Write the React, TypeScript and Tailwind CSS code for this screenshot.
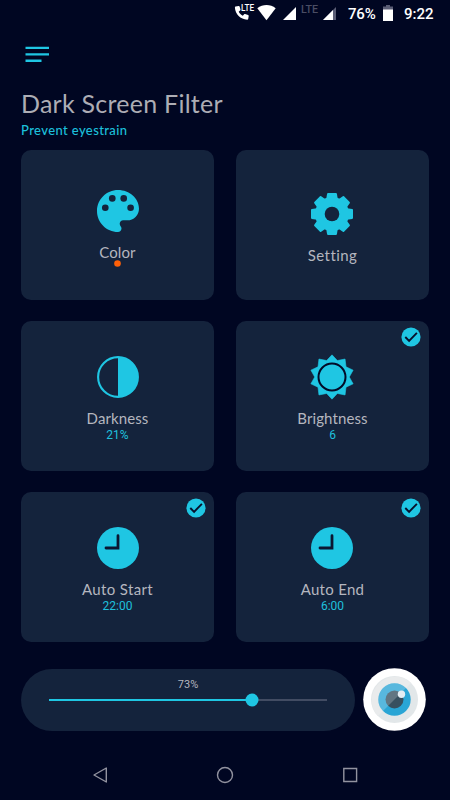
import type { ReactNode } from "react";

const GEAR_TEETH = [0, 45, 90, 135, 180, 225, 270, 315];

const SUN_POINTS = Array.from({ length: 20 }, (_, i) => {
  const r = i % 2 === 0 ? 22.2 : 17.3;
  const a = (i * Math.PI) / 10;
  return `${(23 + r * Math.sin(a)).toFixed(2)},${(23 - r * Math.cos(a)).toFixed(2)}`;
}).join(" ");

function PaletteIcon() {
  return (
    <svg width="42" height="42" viewBox="3 3 18 18">
      <path
        fill="#1fc6e3"
        d="M12 3c-4.97 0-9 4.03-9 9s4.03 9 9 9c.83 0 1.5-.67 1.5-1.5 0-.39-.15-.74-.39-1.01-.23-.26-.38-.61-.38-.99 0-.83.67-1.5 1.5-1.5H16c2.76 0 5-2.24 5-5 0-4.42-4.03-8-9-8z"
      />
      <g fill="#14233c">
        <circle cx="6.55" cy="10.6" r="1.42" />
        <circle cx="9.55" cy="6.6" r="1.42" />
        <circle cx="14.45" cy="6.6" r="1.42" />
        <circle cx="17.4" cy="10.6" r="1.42" />
      </g>
    </svg>
  );
}

function GearIcon() {
  return (
    <svg width="42" height="42" viewBox="-21 -21 42 42">
      <g fill="#1fc6e3">
        <circle r="17" />
        {GEAR_TEETH.map((deg) => (
          <path key={deg} d="M-5.8-15L-4.9-20.2Q-4.7-21-4-21H4Q4.7-21 4.9-20.2L5.8-15Z" transform={`rotate(${deg})`} />
        ))}
      </g>
      <circle r="7.3" fill="#14233c" />
    </svg>
  );
}

function ContrastIcon() {
  return (
    <svg width="42" height="42" viewBox="0 0 42 42">
      <circle cx="21" cy="21" r="19.9" fill="none" stroke="#1fc6e3" strokeWidth="2.1" />
      <path d="M21 1a20 20 0 0 1 0 40z" fill="#1fc6e3" />
    </svg>
  );
}

function SunIcon() {
  return (
    <svg width="46" height="46" viewBox="0 0 46 46">
      <polygon points={SUN_POINTS} fill="#1fc6e3" stroke="#1fc6e3" strokeWidth="0.6" strokeLinejoin="round" />
      <circle cx="23" cy="23" r="13.5" fill="none" stroke="#020b27" strokeWidth="2" />
    </svg>
  );
}

function ClockIcon() {
  return (
    <svg width="42" height="42" viewBox="0 0 42 42">
      <circle cx="21" cy="21" r="21" fill="#1fc6e3" />
      <path d="M21 8.7V21H9" fill="none" stroke="#0b1732" strokeWidth="2.8" strokeLinecap="round" />
    </svg>
  );
}

function CheckBadge() {
  return (
    <svg className="absolute top-1.5 right-2" width="20" height="20" viewBox="0 0 20 20">
      <circle cx="10" cy="10" r="9.6" fill="#1fc6e3" />
      <path d="M4.3 10l3.8 3.8 7.8-8" fill="none" stroke="#07112c" strokeWidth="1.9" />
    </svg>
  );
}

type TileProps = {
  icon: ReactNode;
  iconClass: string;
  label: string;
  labelClass: string;
  value?: string;
  checked?: boolean;
  dot?: boolean;
};

function Tile({ icon, iconClass, label, labelClass, value, checked, dot }: TileProps) {
  return (
    <div className="relative flex h-[150px] flex-col items-center rounded-[10px] bg-[#14233c]">
      {checked && <CheckBadge />}
      <div className={`flex h-[42px] shrink-0 items-center justify-center ${iconClass}`}>{icon}</div>
      <div className={`mt-2.5 h-5 text-[15px] leading-5 whitespace-nowrap text-[#b4b6bf] ${labelClass}`}>{label}</div>
      {value && <div className="mt-px h-3 font-[Roboto] text-xs leading-3 text-[#1fc0dc]">{value}</div>}
      {dot && (
        <svg className="-mt-0.5" width="7" height="7" viewBox="0 0 7 7">
          <circle cx="3.5" cy="3.5" r="3.3" fill="#ff6008" />
        </svg>
      )}
    </div>
  );
}

function StatusBar() {
  return (
    <div className="flex h-7 justify-end pr-4 font-[Roboto] text-white">
      <svg width="110" height="28" viewBox="230 0 110 28">
        <path
          d="M235.600 6.500l3-.6c.5-.1.8.1 1 .6l.9 2.900c.1.400 0 .700-.2.900l-1.600 1.400c.9 1.800 2.300 3.100 4.100 4.100l1.400-1.500c.3-.3.6-.3.9-.2l3 .8c.5.2.7.5.6 1l-.5 3c-.1.5-.5.8-1 .8-6.800-.4-11.900-5.600-12.300-12.200 0-.5.2-.9.700-1z"
          fill="#fff"
        />
        <text x="241" y="11.200" fontSize="9" fontWeight="500" fill="#fff" textLength="13" lengthAdjust="spacingAndGlyphs">LTE</text>
        <path d="M257.300 8.300c5.500-4.300 13-4.300 18.400 0l-9.200 12z" fill="#fff" />
        <path d="M296 7v13h-13z" fill="#fff" />
        <text x="301" y="12.900" fontSize="11" fontWeight="500" fill="#4a4d64" textLength="17" lengthAdjust="spacingAndGlyphs">LTE</text>
        <path d="M336 7v13h-13z" fill="#5a5d75" />
        <path d="M333 10v10h-10z" fill="#fff" />
      </svg>
      <span className="ml-2 w-[29px] text-[15px] leading-7 font-medium tracking-[-0.2px] whitespace-nowrap">76%</span>
      <svg className="ml-1.5" width="10" height="28" viewBox="0 0 10 28">
        <path d="M3 5h4v1.500h3V21H0V6.500h3z" fill="#5a5d75" />
        <path d="M0 9.500h10V21H0z" fill="#fff" />
      </svg>
      <span className="ml-[11px] w-[30px] text-[15px] leading-7 font-medium whitespace-nowrap">9:22</span>
    </div>
  );
}

function EyeButton() {
  return (
    <svg width="63" height="63" viewBox="-31.500 -31.500 63 63">
      <defs>
        <clipPath id="iris">
          <circle r="16.200" />
        </clipPath>
      </defs>
      <circle r="31.300" fill="#fff" />
      <circle r="23.500" fill="#e2e7e9" />
      <path d="M-16.600 16.600A23.500 23.500 0 0 1 16.600-16.600z" fill="#e9ebec" />
      <circle r="16.200" fill="#29a5d5" />
      <circle r="9" fill="#37505f" />
      <path d="M-20 20V-20H20z" fill="#fff" fillOpacity="0.22" clipPath="url(#iris)" />
      <circle cx="7" cy="-5.200" r="3.700" fill="#e3edf3" />
    </svg>
  );
}

export default function App() {
  return (
    <div className="flex h-[800px] w-[450px] flex-col overflow-hidden bg-[#000622] font-[Lato,sans-serif] [font-variant-ligatures:none]">
      <StatusBar />
      <header className="h-[122px] pt-[18px] pl-[21px]">
        <svg className="ml-1" width="24" height="17" viewBox="0 0 24 17">
          <path d="M.5 1.900H24M.5 8.400H24M.5 14.700H16.500" stroke="#1fc6e3" strokeWidth="2.400" />
        </svg>
        <h1 className="mt-6 h-8 text-[25px] leading-8 tracking-[0.25px] whitespace-nowrap text-[#adadb5]">Dark Screen Filter</h1>
        <p className="mt-px h-5 text-[13px] leading-5 font-medium tracking-[0.4px] whitespace-nowrap text-[#1cc0dc]">Prevent eyestrain</p>
      </header>
      <main className="grid grid-cols-2 gap-x-[22px] gap-y-[21px] px-[21px]">
        <Tile icon={<PaletteIcon />} iconClass="mt-10" label="Color" labelClass="tracking-[0.1px]" dot />
        <Tile icon={<GearIcon />} iconClass="mt-[43px] -ml-px" label="Setting" labelClass="tracking-[0.4px]" />
        <Tile icon={<ContrastIcon />} iconClass="mt-[35px]" label="Darkness" labelClass="tracking-[0.1px]" value="21%" />
        <Tile icon={<SunIcon />} iconClass="mt-[35px] -ml-px" label="Brightness" labelClass="tracking-[0.1px]" value="6" checked />
        <Tile icon={<ClockIcon />} iconClass="mt-[35px]" label="Auto Start" labelClass="tracking-[0.35px]" value="22:00" checked />
        <Tile icon={<ClockIcon />} iconClass="mt-[35px] -ml-px" label="Auto End" labelClass="tracking-[0.3px]" value="6:00" checked />
      </main>
      <div className="mt-[26px] flex h-[63px] pl-[21px]">
        <div className="mt-px h-[62px] w-[334px] rounded-full bg-[#14233c] px-7 pt-2.5">
          <div className="h-3 text-center font-[Roboto] text-[11px] leading-3 text-[#b4b6bf]">73%</div>
          <div className="relative mt-2 h-0.5 bg-[#424c63]">
            <div className="h-full w-[73%] bg-[#1fc6e3]" />
            <div className="absolute top-1/2 left-[73%] size-[13px] -translate-x-1/2 -translate-y-1/2 rounded-full bg-[#1fc6e3]" />
          </div>
        </div>
        <div className="ml-2">
          <EyeButton />
        </div>
      </div>
      <nav className="mt-[34px] flex justify-between px-[91px]">
        <svg width="18" height="20" viewBox="0 0 18 20" fill="none" stroke="#9293a0" strokeWidth="1.400">
          <path d="M15.300 3v14L3 10z" strokeLinejoin="round" />
        </svg>
        <svg width="18" height="20" viewBox="0 0 18 20" fill="none" stroke="#9293a0" strokeWidth="1.400">
          <circle cx="9" cy="10" r="7.500" />
        </svg>
        <svg width="18" height="20" viewBox="0 0 18 20" fill="none" stroke="#9293a0" strokeWidth="1.400">
          <path d="M2.800 3.500h12.800v13H2.800z" />
        </svg>
      </nav>
    </div>
  );
}
